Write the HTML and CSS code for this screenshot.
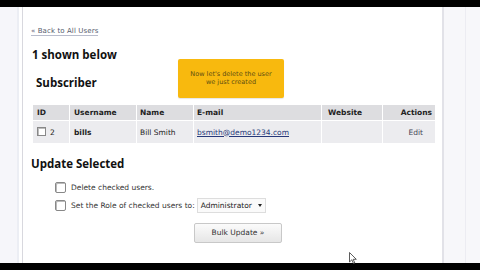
FILE: index.html
```html
<!DOCTYPE html>
<html>
<head>
<meta charset="utf-8">
<link rel="stylesheet" href="styles.css">
</head>
<body>
<div class="bar-top"></div>
<div class="middle">
  <div class="side-left"></div>
  <div class="main">
    <a class="back" href="#">« Back to All Users</a>
    <h2 class="count">1 shown below</h2>
    <h3 class="role">Subscriber</h3>
    <table class="users">
      <thead>
        <tr><th class="c-id">ID</th><th class="c-user">Username</th><th class="c-name">Name</th><th class="c-mail">E-mail</th><th class="c-web">Website</th><th class="c-act">Actions</th></tr>
      </thead>
      <tbody>
        <tr><td class="c-id"><span class="cb"></span>2</td><td class="c-user"><b>bills</b></td><td class="c-name name">Bill Smith</td><td class="c-mail"><a href="#">bsmith@demo1234.com</a></td><td class="c-web"></td><td class="c-act act">Edit</td></tr>
      </tbody>
    </table>
    <h2 class="update">Update Selected</h2>
    <div class="opt"><span class="cb big"></span><span>Delete checked users.</span></div>
    <div class="opt"><span class="cb big"></span><span>Set the Role of checked users to:</span><span class="select">Administrator <i class="arrow"></i></span></div>
    <div class="btnrow"><span class="btn">Bulk Update »</span></div>
    <div class="tip">Now let's delete the user<br>we just created</div>
    <svg class="cursor" width="8" height="12" viewBox="0 0 8 12"><path d="M0.5 0.5 L0.5 10 L2.8 7.8 L4.5 11.5 L5.8 11 L4.2 7.3 L7.3 7.3 Z" fill="#fff" stroke="#333" stroke-width="0.8"/></svg>
  </div>
  <div class="side-right"><div class="inner-line"></div></div>
</div>
<div class="bar-bottom"></div>
</body>
</html>
```
FILE: styles.css
```css
html, body { margin: 0; padding: 0; }
body { width: 480px; height: 270px; overflow: hidden; font-family: "DejaVu Sans", Verdana, sans-serif; background: #fff; color: #222; }
.bar-top { height: 7px; background: #000; }
.bar-bottom { height: 7px; background: #000; }
.middle { display: flex; height: 256px; }
.side-left { width: 17px; background: #f6f6fa; border-right: 2px solid #eceef4; box-shadow: 3px 0 0 #fff, 4px 0 0 #d8d8de; margin-right: 4px; }
.side-right { flex: 1; background: #f7f7fa; border-left: 2px solid #e2e2e8; }
.inner-line { margin-left: 21px; width: 1px; height: 100%; background: #ececf2; }
.main { position: relative; width: 419px; padding: 0 0 0 8px; box-sizing: border-box; }
.back { display: inline-block; margin-top: 20px; font-size: 7px; color: #555b6e; text-decoration: none; border-bottom: 1px solid #b8bccc; line-height: 8px; letter-spacing: 0.1px; }
.count, .role, .update { font-family: "Open Sans", "DejaVu Sans", sans-serif; font-weight: bold; font-size: 11.5px; line-height: 14px; color: #111; }
.count { margin: 11px 0 0 1px; }
.role { margin: 14px 0 0 5px; }
.users { margin: 14px 0 0 1px; border-collapse: separate; border-spacing: 1px 1px; table-layout: fixed; width: 404px; font-size: 7.5px; }
.users th { background: #dddde0; text-align: left; height: 15px; padding: 0 4px; font-weight: bold; color: #222; }
.users td { background: #ececef; height: 22px; padding: 0 4px; color: #222; }
.users .c-id { width: 28px; }
.users .c-user { width: 58px; }
.users .c-name { width: 49px; padding-left: 3px; }
.users .c-mail { width: 120px; padding-left: 3px; }
.users .c-web { width: 50px; padding-left: 6px; }
.users th.c-act { text-align: right; padding-right: 3px; }
.users td.act { text-align: right; padding-right: 12px; color: #445; }
.name { color: #3d4e6d; }
.users a { color: #27397a; text-decoration: underline; }
.cb { display: inline-block; width: 7px; height: 7px; border: 1px solid #888; background: #fff; margin-right: 4px; vertical-align: -1px; box-shadow: inset 1px 1px 0 #bbb; }
.cb.big { width: 9px; height: 9px; border-radius: 2px; margin-right: 5px; }
.update { margin: 13px 0 0 0; }
.opt { display: flex; align-items: center; margin: 11px 0 0 24px; font-size: 7.5px; color: #333; height: 11px; }
.opt + .opt { margin-top: 7px; }
.select { margin-left: 2px; border: 1px solid #ddd; background: #fafafa; padding: 2px 3px; font-size: 7.5px; color: #222; display: inline-flex; align-items: center; gap: 6px; }
.arrow { display: inline-block; width: 0; height: 0; border-left: 2.5px solid transparent; border-right: 2.5px solid transparent; border-top: 3px solid #222; }
.btnrow { margin: 9px 0 0 163px; }
.btn { display: inline-block; width: 86px; height: 18px; line-height: 18px; text-align: center; font-size: 7.5px; color: #333; border: 1px solid #c8c8c8; border-radius: 2px; background: linear-gradient(#fbfbfb, #e6e6e6); }
.tip { position: absolute; left: 155px; top: 52px; width: 106px; height: 39px; box-sizing: border-box; background: #f8b90e; border-radius: 2px; font-size: 6.5px; color: #5e4e12; text-align: center; padding-top: 11px; line-height: 8px; box-shadow: 0 1px 1px rgba(0,0,0,0.1); }
.cursor { position: absolute; left: 326px; top: 245px; }
```
